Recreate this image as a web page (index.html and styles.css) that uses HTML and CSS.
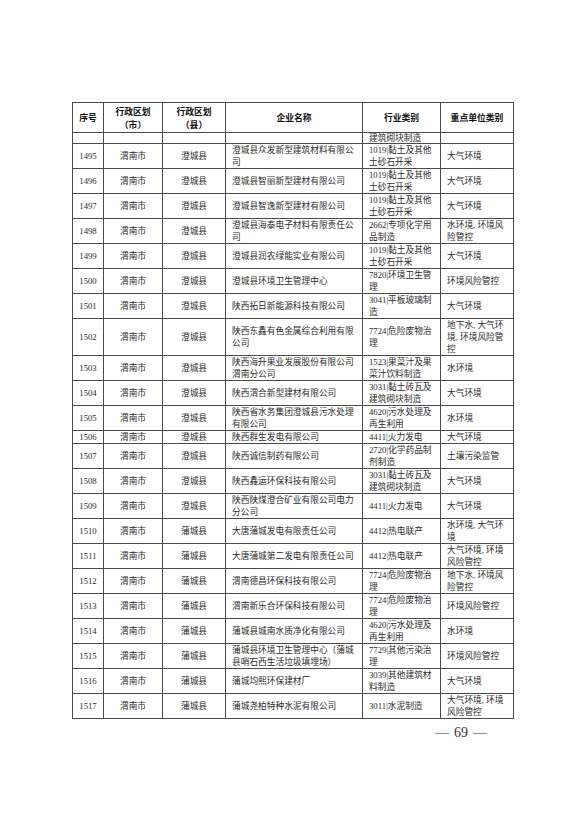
FILE: index.html
```html
<!DOCTYPE html>
<html lang="zh">
<head>
<meta charset="utf-8">
<link rel="stylesheet" href="styles.css">
</head>
<body>
<div class="page">
<table class="list">
<colgroup>
<col class="c-no"><col class="c-city"><col class="c-county"><col class="c-name"><col class="c-ind"><col class="c-key">
</colgroup>
<thead>
<tr class="head">
<th>序号</th><th>行政区划<br>（市）</th><th>行政区划<br>（县）</th><th>企业名称</th><th>行业类别</th><th>重点单位类别</th>
</tr>
</thead>
<tbody>
<tr class="cont"><td></td><td></td><td></td><td></td><td class="l">建筑砌块制造</td><td></td></tr>
<tr><td>1495</td><td>渭南市</td><td>澄城县</td><td class="l">澄城县众发新型建筑材料有限公<br>司</td><td class="l">1019|黏土及其他<br>土砂石开采</td><td class="l">大气环境</td></tr>
<tr><td>1496</td><td>渭南市</td><td>澄城县</td><td class="l">澄城县智丽新型建材有限公司</td><td class="l">1019|黏土及其他<br>土砂石开采</td><td class="l">大气环境</td></tr>
<tr><td>1497</td><td>渭南市</td><td>澄城县</td><td class="l">澄城县智逸新型建材有限公司</td><td class="l">1019|黏土及其他<br>土砂石开采</td><td class="l">大气环境</td></tr>
<tr><td>1498</td><td>渭南市</td><td>澄城县</td><td class="l">澄城县海泰电子材料有限责任公<br>司</td><td class="l">2662|专项化学用<br>品制造</td><td class="l">水环境, 环境风<br>险管控</td></tr>
<tr><td>1499</td><td>渭南市</td><td>澄城县</td><td class="l">澄城县润农绿能实业有限公司</td><td class="l">1019|黏土及其他<br>土砂石开采</td><td class="l">大气环境</td></tr>
<tr><td>1500</td><td>渭南市</td><td>澄城县</td><td class="l">澄城县环境卫生管理中心</td><td class="l">7820|环境卫生管<br>理</td><td class="l">环境风险管控</td></tr>
<tr><td>1501</td><td>渭南市</td><td>澄城县</td><td class="l">陕西拓日新能源科技有限公司</td><td class="l">3041|平板玻璃制<br>造</td><td class="l">大气环境</td></tr>
<tr><td>1502</td><td>渭南市</td><td>澄城县</td><td class="l">陕西东鑫有色金属综合利用有限<br>公司</td><td class="l">7724|危险废物治<br>理</td><td class="l">地下水, 大气环<br>境, 环境风险管<br>控</td></tr>
<tr><td>1503</td><td>渭南市</td><td>澄城县</td><td class="l">陕西海升果业发展股份有限公司<br>渭南分公司</td><td class="l">1523|果菜汁及果<br>菜汁饮料制造</td><td class="l">水环境</td></tr>
<tr><td>1504</td><td>渭南市</td><td>澄城县</td><td class="l">陕西渭合新型建材有限公司</td><td class="l">3031|黏土砖瓦及<br>建筑砌块制造</td><td class="l">大气环境</td></tr>
<tr><td>1505</td><td>渭南市</td><td>澄城县</td><td class="l">陕西省水务集团澄城县污水处理<br>有限公司</td><td class="l">4620|污水处理及<br>再生利用</td><td class="l">水环境</td></tr>
<tr><td>1506</td><td>渭南市</td><td>澄城县</td><td class="l">陕西群生发电有限公司</td><td class="l">4411|火力发电</td><td class="l">大气环境</td></tr>
<tr><td>1507</td><td>渭南市</td><td>澄城县</td><td class="l">陕西诚信制药有限公司</td><td class="l">2720|化学药品制<br>剂制造</td><td class="l">土壤污染监管</td></tr>
<tr><td>1508</td><td>渭南市</td><td>澄城县</td><td class="l">陕西鑫运环保科技有限公司</td><td class="l">3031|黏土砖瓦及<br>建筑砌块制造</td><td class="l">大气环境</td></tr>
<tr><td>1509</td><td>渭南市</td><td>澄城县</td><td class="l">陕西陕煤澄合矿业有限公司电力<br>分公司</td><td class="l">4411|火力发电</td><td class="l">大气环境</td></tr>
<tr><td>1510</td><td>渭南市</td><td>蒲城县</td><td class="l">大唐蒲城发电有限责任公司</td><td class="l">4412|热电联产</td><td class="l">水环境, 大气环<br>境</td></tr>
<tr><td>1511</td><td>渭南市</td><td>蒲城县</td><td class="l">大唐蒲城第二发电有限责任公司</td><td class="l">4412|热电联产</td><td class="l">大气环境, 环境<br>风险管控</td></tr>
<tr><td>1512</td><td>渭南市</td><td>蒲城县</td><td class="l">渭南德昌环保科技有限公司</td><td class="l">7724|危险废物治<br>理</td><td class="l">地下水, 环境风<br>险管控</td></tr>
<tr><td>1513</td><td>渭南市</td><td>蒲城县</td><td class="l">渭南新乐合环保科技有限公司</td><td class="l">7724|危险废物治<br>理</td><td class="l">环境风险管控</td></tr>
<tr><td>1514</td><td>渭南市</td><td>蒲城县</td><td class="l">蒲城县城南水质净化有限公司</td><td class="l">4620|污水处理及<br>再生利用</td><td class="l">水环境</td></tr>
<tr><td>1515</td><td>渭南市</td><td>蒲城县</td><td class="l">蒲城县环境卫生管理中心（蒲城<br>县哨石西生活垃圾填埋场）</td><td class="l">7729|其他污染治<br>理</td><td class="l">环境风险管控</td></tr>
<tr><td>1516</td><td>渭南市</td><td>蒲城县</td><td class="l">蒲城均熙环保建材厂</td><td class="l">3039|其他建筑材<br>料制造</td><td class="l">大气环境</td></tr>
<tr><td>1517</td><td>渭南市</td><td>蒲城县</td><td class="l">蒲城尧柏特种水泥有限公司</td><td class="l">3011|水泥制造</td><td class="l">大气环境, 环境<br>风险管控</td></tr>
</tbody>
</table>
<div class="folio"><span class="dash">—</span><span class="num">69</span><span class="dash">—</span></div>
</div>
</body>
</html>
```
FILE: styles.css
```css
html, body {
  margin: 0;
  padding: 0;
  background: #ffffff;
}

.page {
  width: 578px;
  height: 818px;
  box-sizing: border-box;
  padding: 102px 0 0 72px;
  font-family: "Liberation Serif", "Noto Sans CJK SC", serif;
  color: #2a2a2a;
}

.list {
  width: 441px;
  table-layout: fixed;
  border-collapse: collapse;
  border: 1.5px solid #1a1a1a;
}

.c-no { width: 31px; }
.c-city { width: 59px; }
.c-county { width: 63px; }
.c-name { width: 137px; }
.c-ind { width: 78px; }
.c-key { width: 73px; }

.list th,
.list td {
  border: 1px solid #4a4a4a;
  padding: 0;
  vertical-align: middle;
  text-align: center;
  white-space: nowrap;
  overflow: hidden;
}

.list th {
  font-family: "Noto Sans CJK SC", sans-serif;
  font-weight: 700;
  font-size: 8.8px;
  line-height: 13px;
  padding: 1.5px 0;
  color: #111;
}

.list td {
  font-size: 8.7px;
  line-height: 12px;
}

.list td.l {
  text-align: left;
  padding: 0 4px 0 6px;
}

.list tr.cont td {
  height: 10px;
  line-height: 10px;
}

.folio {
  display: flex;
  justify-content: flex-end;
  align-items: center;
  gap: 5px;
  width: 415px;
  margin-top: 4px;
  font-family: "Liberation Serif", serif;
  font-size: 14px;
  line-height: 20px;
  color: #333;
}

.folio .dash {
  font-size: 14px;
}
```
